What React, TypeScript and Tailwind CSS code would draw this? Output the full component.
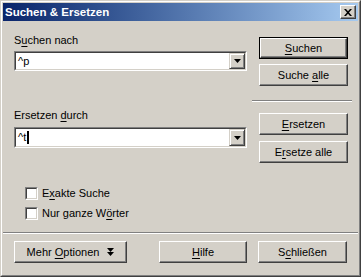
import React from "react";

const font = { fontFamily: '"Liberation Sans", Arial, sans-serif' };

function U({ children }: { children: React.ReactNode }) {
  return <span className="underline underline-offset-[2px]">{children}</span>;
}

const face =
  "flex h-full w-full items-center justify-center border border-t-white border-l-white border-r-[#404040] border-b-[#404040] shadow-[inset_-1px_-1px_0_#808080] text-[11px] leading-[13px] text-black";

function Button({
  children,
  className = "",
  isDefault = false,
}: {
  children: React.ReactNode;
  className?: string;
  isDefault?: boolean;
}) {
  return (
    <div className={`h-[22px] ${isDefault ? "border border-black" : ""} ${className}`}>
      <div className={face}>{children}</div>
    </div>
  );
}

function Combo({ value, caret = false, h = "h-[20px]" }: { value: string; caret?: boolean; h?: string }) {
  return (
    <div className={`${h} border border-t-[#808080] border-l-[#808080] border-r-white border-b-white`}>
      <div className="flex h-full items-stretch border border-t-[#404040] border-l-[#404040] border-r-[#d4d0c8] border-b-[#d4d0c8] bg-white">
        <div className="flex flex-1 items-center pl-[2px] text-[11px] leading-[13px] text-black">
          <span>{value}</span>
          {caret && <span className="ml-px inline-block h-[13px] w-[2px] bg-black" />}
        </div>
        <div className="flex w-[16px] items-center justify-center border border-t-[#d4d0c8] border-l-[#d4d0c8] border-r-[#404040] border-b-[#404040] bg-[#d4d0c8] shadow-[inset_1px_1px_0_#fff,inset_-1px_-1px_0_#808080]">
          <svg width="7" height="4" viewBox="0 0 7 4">
            <path d="M0 0h7L3.5 4z" fill="#000" />
          </svg>
        </div>
      </div>
    </div>
  );
}

function Check({ children }: { children: React.ReactNode }) {
  return (
    <div className="flex items-center">
      <div className="h-[13px] w-[13px] border border-t-[#808080] border-l-[#808080] border-r-white border-b-white">
        <div className="h-full w-full border border-t-[#404040] border-l-[#404040] border-r-[#d4d0c8] border-b-[#d4d0c8] bg-white" />
      </div>
      <span className="ml-[4px] text-[11px] leading-[13px] text-black">{children}</span>
    </div>
  );
}

export default function App() {
  return (
    <div style={font} className="h-[277px] w-[361px] border border-t-[#d4d0c8] border-l-[#d4d0c8] border-r-[#404040] border-b-[#404040] bg-[#d4d0c8]">
      <div className="flex h-full w-full flex-col border border-t-white border-l-white border-r-[#808080] border-b-[#808080] p-px">
        {/* title bar */}
        <div className="flex h-[18px] items-center justify-between bg-gradient-to-r from-[#0a246a] to-[#a6caf0] pl-[2px] pr-[2px]">
          <span className="text-[11.5px] font-bold leading-[14px] text-white">Suchen &amp; Ersetzen</span>
          <div className="flex h-[14px] w-[16px] items-center justify-center border border-t-white border-l-white border-r-[#404040] border-b-[#404040] bg-[#d4d0c8] shadow-[inset_-1px_-1px_0_#808080]">
            <svg width="8" height="7" viewBox="0 0 8 7">
              <path d="M0 0h2l2 2.2L6 0h2L5 3.5 8 7H6L4 4.8 2 7H0l3-3.5z" fill="#000" />
            </svg>
          </div>
        </div>

        {/* main area */}
        <div className="flex h-[211px] pl-[11px] pr-[10px]">
          <div className="flex w-[233px] flex-col">
            <div className="mt-[13px] text-[11px] leading-[13px] text-black">
              S<U>u</U>chen nach
            </div>
            <div className="mt-[4px]">
              <Combo value="^p" />
            </div>
            <div className="mt-[38px] text-[11px] leading-[13px] text-black">
              Ersetzen <U>d</U>urch
            </div>
            <div className="mt-[5px]">
              <Combo value="^t" caret h="h-[21px]" />
            </div>
            <div className="ml-[11px] mt-[39px] flex flex-col gap-[7px]">
              <Check>
                E<U>x</U>akte Suche
              </Check>
              <Check>
                Nur ganze W<U>ö</U>rter
              </Check>
            </div>
          </div>
          <div className="ml-[12px] flex w-[89px] flex-col">
            <Button isDefault className="mt-[16px]">
              <span>
                <U>S</U>uchen
              </span>
            </Button>
            <Button className="mt-[5px]">
              <span>
                Suche <U>a</U>lle
              </span>
            </Button>
            <div className="-ml-[7px] -mr-[4px] mt-[14px] h-[2px] border-t border-t-[#808080] border-b border-b-white" />
            <Button className="mt-[11px]">
              <span>
                <U>E</U>rsetzen
              </span>
            </Button>
            <Button className="mt-[6px]">
              <span>
                E<U>r</U>setze alle
              </span>
            </Button>
          </div>
        </div>

        {/* separator */}
        <div className="h-[2px] border-t border-t-[#808080] border-b border-b-white" />

        {/* bottom buttons */}
        <div className="mt-[7px] flex pl-[11px]">
          <Button className="w-[113px]">
            <span>
              Mehr <U>O</U>ptionen
            </span>
            <svg className="ml-[8px]" width="7" height="8" viewBox="0 0 7 8">
              <path d="M0 0h7L3.5 4z M0 4h7L3.5 8z" fill="#000" />
            </svg>
          </Button>
          <Button className="ml-[32px] w-[88px]">
            <span>
              <U>H</U>ilfe
            </span>
          </Button>
          <Button className="ml-[11px] w-[89px]">
            <span>
              S<U>c</U>hließen
            </span>
          </Button>
        </div>
      </div>
    </div>
  );
}
